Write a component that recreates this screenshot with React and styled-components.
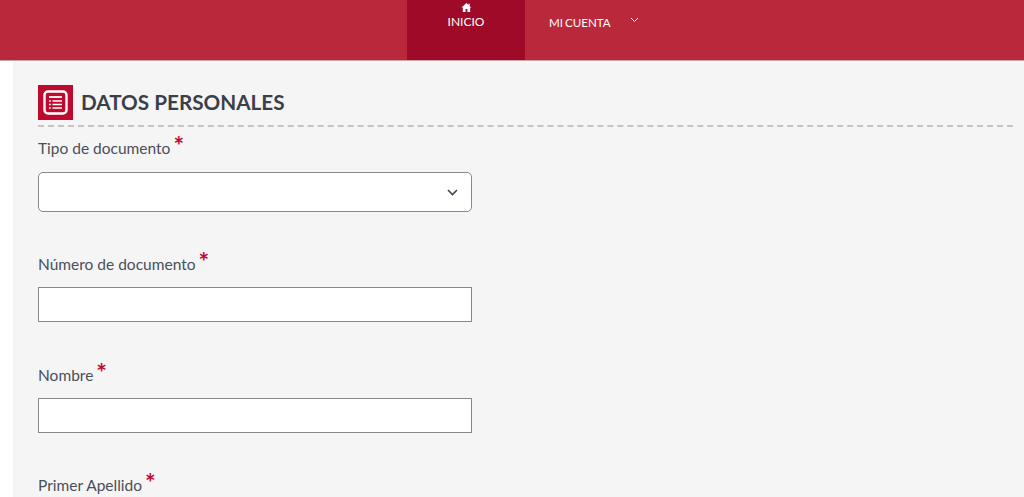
import React from 'react';
import styled, { createGlobalStyle } from 'styled-components';

const GlobalStyle = createGlobalStyle`
  html, body {
    margin: 0;
    padding: 0;
    height: 497px;
    overflow: hidden;
    background: #fff;
    font-family: Lato, "Open Sans", sans-serif;
  }
  * { box-sizing: border-box; }
`;

const Header = styled.header`
  height: 61px;
  background: #b9293b;
  border-bottom: 1px solid #c9a6a9;
  display: flex;
  padding-left: 407px;
`;

const NavItem = styled.a`
  display: flex;
  flex-direction: column;
  align-items: center;
  width: 118px;
  height: 60px;
  padding-top: 2px;
  color: #fff;
  font-size: 12px;
  line-height: 14px;
  background: ${p => (p.$active ? '#9e0a28' : 'transparent')};
`;

const NavText = styled.span`
  margin-top: 2px;
`;

const AccountItem = styled.a`
  display: flex;
  align-items: flex-start;
  padding: 16px 0 0 24px;
  color: #fff;
  font-size: 11.6px;
  line-height: 14px;
  word-spacing: -1px;
`;

const Caret = styled.svg`
  width: 9px;
  height: 6px;
  margin: 1px 0 0 19px;
`;

const Content = styled.main`
  margin-left: 13px;
  background: #f5f5f5;
  height: 436px;
  padding: 24px 11px 0 25px;
`;

const TitleRow = styled.div`
  display: flex;
  align-items: flex-start;
  gap: 8px;
  height: 42px;
  border-bottom: 2px dashed #c4c4c4;
`;

const TitleIcon = styled.span`
  width: 35px;
  height: 35px;
  background: #bf0a30;
  display: flex;
  align-items: center;
  justify-content: center;
`;

const Title = styled.h1`
  margin: 0;
  font-size: 20.7px;
  line-height: 35px;
  font-weight: 700;
  color: #3b3f4a;
`;

const Field = styled.div`
  width: 434px;
  margin-bottom: ${p => p.$gap}px;
`;

const Label = styled.label`
  display: block;
  height: ${p => (p.$first ? 45 : 44)}px;
  padding-top: 10px;
  font-size: 15.5px;
  line-height: 22px;
  color: #4a4f5a;
`;

const Required = styled.sup`
  color: #bf0a30;
  font-size: 25px;
  font-weight: 700;
  line-height: 0;
  margin-left: 3px;
  vertical-align: -1px;
`;

const SelectBox = styled.div`
  height: 40px;
  background: #fff;
  border: 1px solid #888;
  border-radius: 5px;
  display: flex;
  align-items: center;
  justify-content: flex-end;
  padding-right: 13px;
`;

const TextBox = styled.input`
  display: block;
  width: 100%;
  height: 35px;
  background: #fff;
  border: 1px solid #888;
  border-radius: 0;
  outline: none;
`;

function FieldLabel({ first, children }) {
  return (
    <Label $first={first}>
      {children}
      <Required>*</Required>
    </Label>
  );
}

export default function App() {
  return (
    <>
      <GlobalStyle />
      <Header>
        <NavItem $active>
          <svg width="11" height="11" viewBox="0 0 24 24" fill="#fff">
            <path d="M12 2 1 12h3v10h6v-7h4v7h6V12h3L19 9.3V4h-3v2.6z" />
          </svg>
          <NavText>INICIO</NavText>
        </NavItem>
        <AccountItem>
          MI CUENTA
          <Caret viewBox="0 0 9 6" fill="none" stroke="#fff" strokeWidth="1">
            <path d="M1 1l3.5 3.5L8 1" />
          </Caret>
        </AccountItem>
      </Header>
      <Content>
        <TitleRow>
          <TitleIcon>
            <svg width="25" height="25" viewBox="0 0 25 25" fill="none" stroke="#fff">
              <rect x="1.5" y="1.5" width="22" height="22" rx="3.5" strokeWidth="2.4" />
              <path d="M6 7h13" strokeWidth="1.8" />
              <path d="M9.5 11h9.5M9.5 14.5h9.5M9.5 18h9.5" strokeWidth="1.6" />
              <path d="M6 11h1.8M6 14.5h1.8M6 18h1.8" strokeWidth="1.6" />
            </svg>
          </TitleIcon>
          <Title>DATOS PERSONALES</Title>
        </TitleRow>
        <Field $gap={31}>
          <FieldLabel first>Tipo de documento</FieldLabel>
          <SelectBox>
            <svg width="11" height="7" viewBox="0 0 11 7" fill="none" stroke="#3f4254" strokeWidth="1.6">
              <path d="M1 1l4.5 4.5L10 1" />
            </svg>
          </SelectBox>
        </Field>
        <Field $gap={32}>
          <FieldLabel>Número de documento</FieldLabel>
          <TextBox />
        </Field>
        <Field $gap={31}>
          <FieldLabel>Nombre</FieldLabel>
          <TextBox />
        </Field>
        <Field $gap={0}>
          <FieldLabel>Primer Apellido</FieldLabel>
        </Field>
      </Content>
    </>
  );
}
